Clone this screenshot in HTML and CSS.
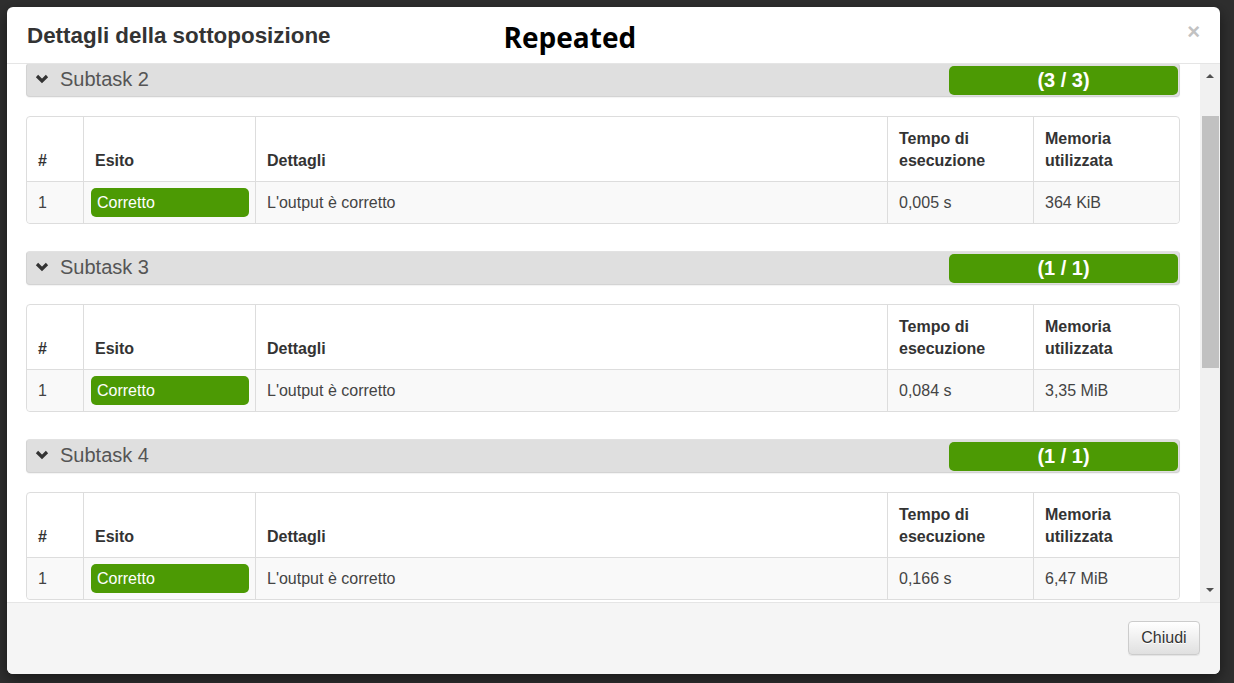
FILE: index.html
```html
<!DOCTYPE html>
<html lang="it">
<head>
<meta charset="utf-8">
<title>Dettagli della sottoposizione</title>
<link rel="stylesheet" href="styles.css">
</head>
<body>
<div class="backdrop">
  <div class="modal">
    <div class="modal-header">
      <h4 class="modal-title">Dettagli della sottoposizione</h4>
      <span class="repeated">Repeated</span>
      <span class="close">×</span>
    </div>
    <div class="modal-body">
      <div class="scroll-content">
        <div class="subtask">
          <div class="subtask-bar">
            <svg class="chev" width="14" height="10" viewBox="0 0 14 10"><polyline points="2,2 7,7 12,2" fill="none" stroke="#333" stroke-width="3.2"/></svg>
            <span class="subtask-name">Subtask 2</span>
            <span class="score">(3 / 3)</span>
          </div>
          <table class="tests">
            <colgroup><col class="c1"><col class="c2"><col class="c3"><col class="c4"><col class="c5"></colgroup>
            <thead><tr><th>#</th><th>Esito</th><th>Dettagli</th><th>Tempo di<br>esecuzione</th><th>Memoria<br>utilizzata</th></tr></thead>
            <tbody><tr><td>1</td><td class="esito"><span class="ok">Corretto</span></td><td>L'output è corretto</td><td>0,005 s</td><td>364 KiB</td></tr></tbody>
          </table>
        </div>
        <div class="subtask">
          <div class="subtask-bar">
            <svg class="chev" width="14" height="10" viewBox="0 0 14 10"><polyline points="2,2 7,7 12,2" fill="none" stroke="#333" stroke-width="3.2"/></svg>
            <span class="subtask-name">Subtask 3</span>
            <span class="score">(1 / 1)</span>
          </div>
          <table class="tests">
            <colgroup><col class="c1"><col class="c2"><col class="c3"><col class="c4"><col class="c5"></colgroup>
            <thead><tr><th>#</th><th>Esito</th><th>Dettagli</th><th>Tempo di<br>esecuzione</th><th>Memoria<br>utilizzata</th></tr></thead>
            <tbody><tr><td>1</td><td class="esito"><span class="ok">Corretto</span></td><td>L'output è corretto</td><td>0,084 s</td><td>3,35 MiB</td></tr></tbody>
          </table>
        </div>
        <div class="subtask">
          <div class="subtask-bar">
            <svg class="chev" width="14" height="10" viewBox="0 0 14 10"><polyline points="2,2 7,7 12,2" fill="none" stroke="#333" stroke-width="3.2"/></svg>
            <span class="subtask-name">Subtask 4</span>
            <span class="score">(1 / 1)</span>
          </div>
          <table class="tests">
            <colgroup><col class="c1"><col class="c2"><col class="c3"><col class="c4"><col class="c5"></colgroup>
            <thead><tr><th>#</th><th>Esito</th><th>Dettagli</th><th>Tempo di<br>esecuzione</th><th>Memoria<br>utilizzata</th></tr></thead>
            <tbody><tr><td>1</td><td class="esito"><span class="ok">Corretto</span></td><td>L'output è corretto</td><td>0,166 s</td><td>6,47 MiB</td></tr></tbody>
          </table>
        </div>
      </div>
      <div class="scrollbar">
        <div class="arrow up"></div>
        <div class="track"><div class="thumb"></div></div>
        <div class="arrow down"></div>
      </div>
    </div>
    <div class="modal-footer">
      <button class="btn">Chiudi</button>
    </div>
  </div>
</div>
</body>
</html>
```
FILE: styles.css
```css
* { box-sizing: border-box; }
html, body { margin: 0; padding: 0; }
body {
  width: 1234px;
  height: 683px;
  overflow: hidden;
  background: #2f2f2f;
  font-family: "Liberation Sans", Arial, sans-serif;
  color: #333;
}
.backdrop {
  padding: 7px 14px 9px 7px;
  height: 683px;
}
.modal {
  width: 1213px;
  height: 667px;
  background: #fff;
  border-radius: 6px;
  box-shadow: 0 5px 15px rgba(0,0,0,.5);
  display: flex;
  flex-direction: column;
  overflow: hidden;
}
.modal-header {
  height: 57px;
  flex: none;
  border-bottom: 1px solid #e5e5e5;
  display: flex;
  align-items: center;
  padding: 0 20px 0 20px;
}
.modal-title {
  margin: 0;
  font-size: 22.4px;
  font-weight: bold;
  color: #333;
  line-height: 1;
  margin-top: 2px;
}
.repeated {
  margin-left: 173px;
  font-family: "Open Sans", sans-serif;
  font-weight: 700;
  font-size: 28px;
  color: #000;
  line-height: 1;
  margin-top: 3px;
}
.close {
  margin-left: auto;
  font-size: 22px;
  font-weight: bold;
  color: #c2c2c2;
  line-height: 1;
  margin-top: -6px;
}
.modal-body {
  height: 538px;
  flex: none;
  display: flex;
}
.scroll-content {
  flex: 1;
  overflow: hidden;
  padding: 0 20px 0 19px;
}
.subtask { margin-bottom: 27px; }
.subtask:first-child { margin-top: -1px; }
.subtask-bar {
  height: 34px;
  background: #dfdfdf;
  border: 1px solid #d3d3d3;
  border-top-color: #e2e2e2;
  border-radius: 4px;
  padding: 2px 1px 1px 1px;
  display: flex;
  align-items: center;
  box-shadow: 0 1px 1px rgba(0,0,0,.05);
}
.chev { margin-left: 7px; margin-right: 11px; margin-bottom: 3px; }
.subtask-name {
  font-size: 20px;
  color: #555;
  line-height: 1;
  margin-bottom: 4px;
}
.score {
  margin-left: auto;
  align-self: flex-start;
  width: 229px;
  height: 29px;
  background: #4c9a04;
  border-radius: 5px;
  color: #fff;
  font-weight: bold;
  font-size: 20px;
  text-align: center;
  line-height: 29px;
}
.tests {
  margin-top: 19px;
  width: 1154px;
  table-layout: fixed;
  border-collapse: separate;
  border-spacing: 0;
  border: 1px solid #dddddd;
  border-radius: 4px;
  font-size: 16px;
}
.c1 { width: 56px; }
.c2 { width: 172px; }
.c3 { width: 632px; }
.c4 { width: 146px; }
.tests th {
  text-align: left;
  vertical-align: bottom;
  font-weight: bold;
  color: #333;
  line-height: 22px;
  padding: 11px 11px 9px 11px;
  border-bottom: 1px solid #dddddd;
}
.tests th + th, .tests td + td { border-left: 1px solid #dddddd; }
.tests td {
  background: #f9f9f9;
  color: #444;
  line-height: 29px;
  padding: 6px 11px 6px 11px;
  vertical-align: middle;
}
.tests tr td:first-child { border-bottom-left-radius: 4px; }
.tests tr td:last-child { border-bottom-right-radius: 4px; }
.tests td.esito { padding: 6px 6px 6px 7px; }
.ok {
  display: block;
  background: #4c9a04;
  color: #fff;
  border-radius: 5px;
  padding: 0 6px;
  height: 29px;
  line-height: 29px;
}
.scrollbar {
  width: 20px;
  flex: none;
  background: #f1f1f1;
  display: flex;
  flex-direction: column;
}
.arrow {
  height: 20px;
  flex: none;
  display: flex;
  justify-content: center;
  align-items: center;
}
.arrow::before {
  content: "";
  width: 0; height: 0;
  border-left: 4px solid transparent;
  border-right: 4px solid transparent;
}
.arrow.up::before { border-bottom: 4px solid #505050; margin-top: 4px; }
.arrow.down::before { border-top: 4px solid #505050; margin-bottom: 5px; }
.track { flex: 1; padding: 32px 1px 0 2px; }
.thumb { height: 252px; background: #c1c1c1; }
.modal-footer {
  flex: 1;
  background: #f5f5f5;
  border-top: 1px solid #e5e5e5;
  display: flex;
  justify-content: flex-end;
  align-items: flex-start;
  padding: 18px 20px 0 0;
}
.btn {
  font-family: "Liberation Sans", Arial, sans-serif;
  font-size: 16px;
  color: #333;
  width: 72px;
  height: 34px;
  border: 1px solid #ccc;
  border-radius: 4px;
  background: linear-gradient(#ffffff, #e0e0e0);
  text-shadow: 0 1px 0 #fff;
  box-shadow: inset 0 1px 0 rgba(255,255,255,.15), 0 1px 1px rgba(0,0,0,.075);
  padding: 0;
}
```
